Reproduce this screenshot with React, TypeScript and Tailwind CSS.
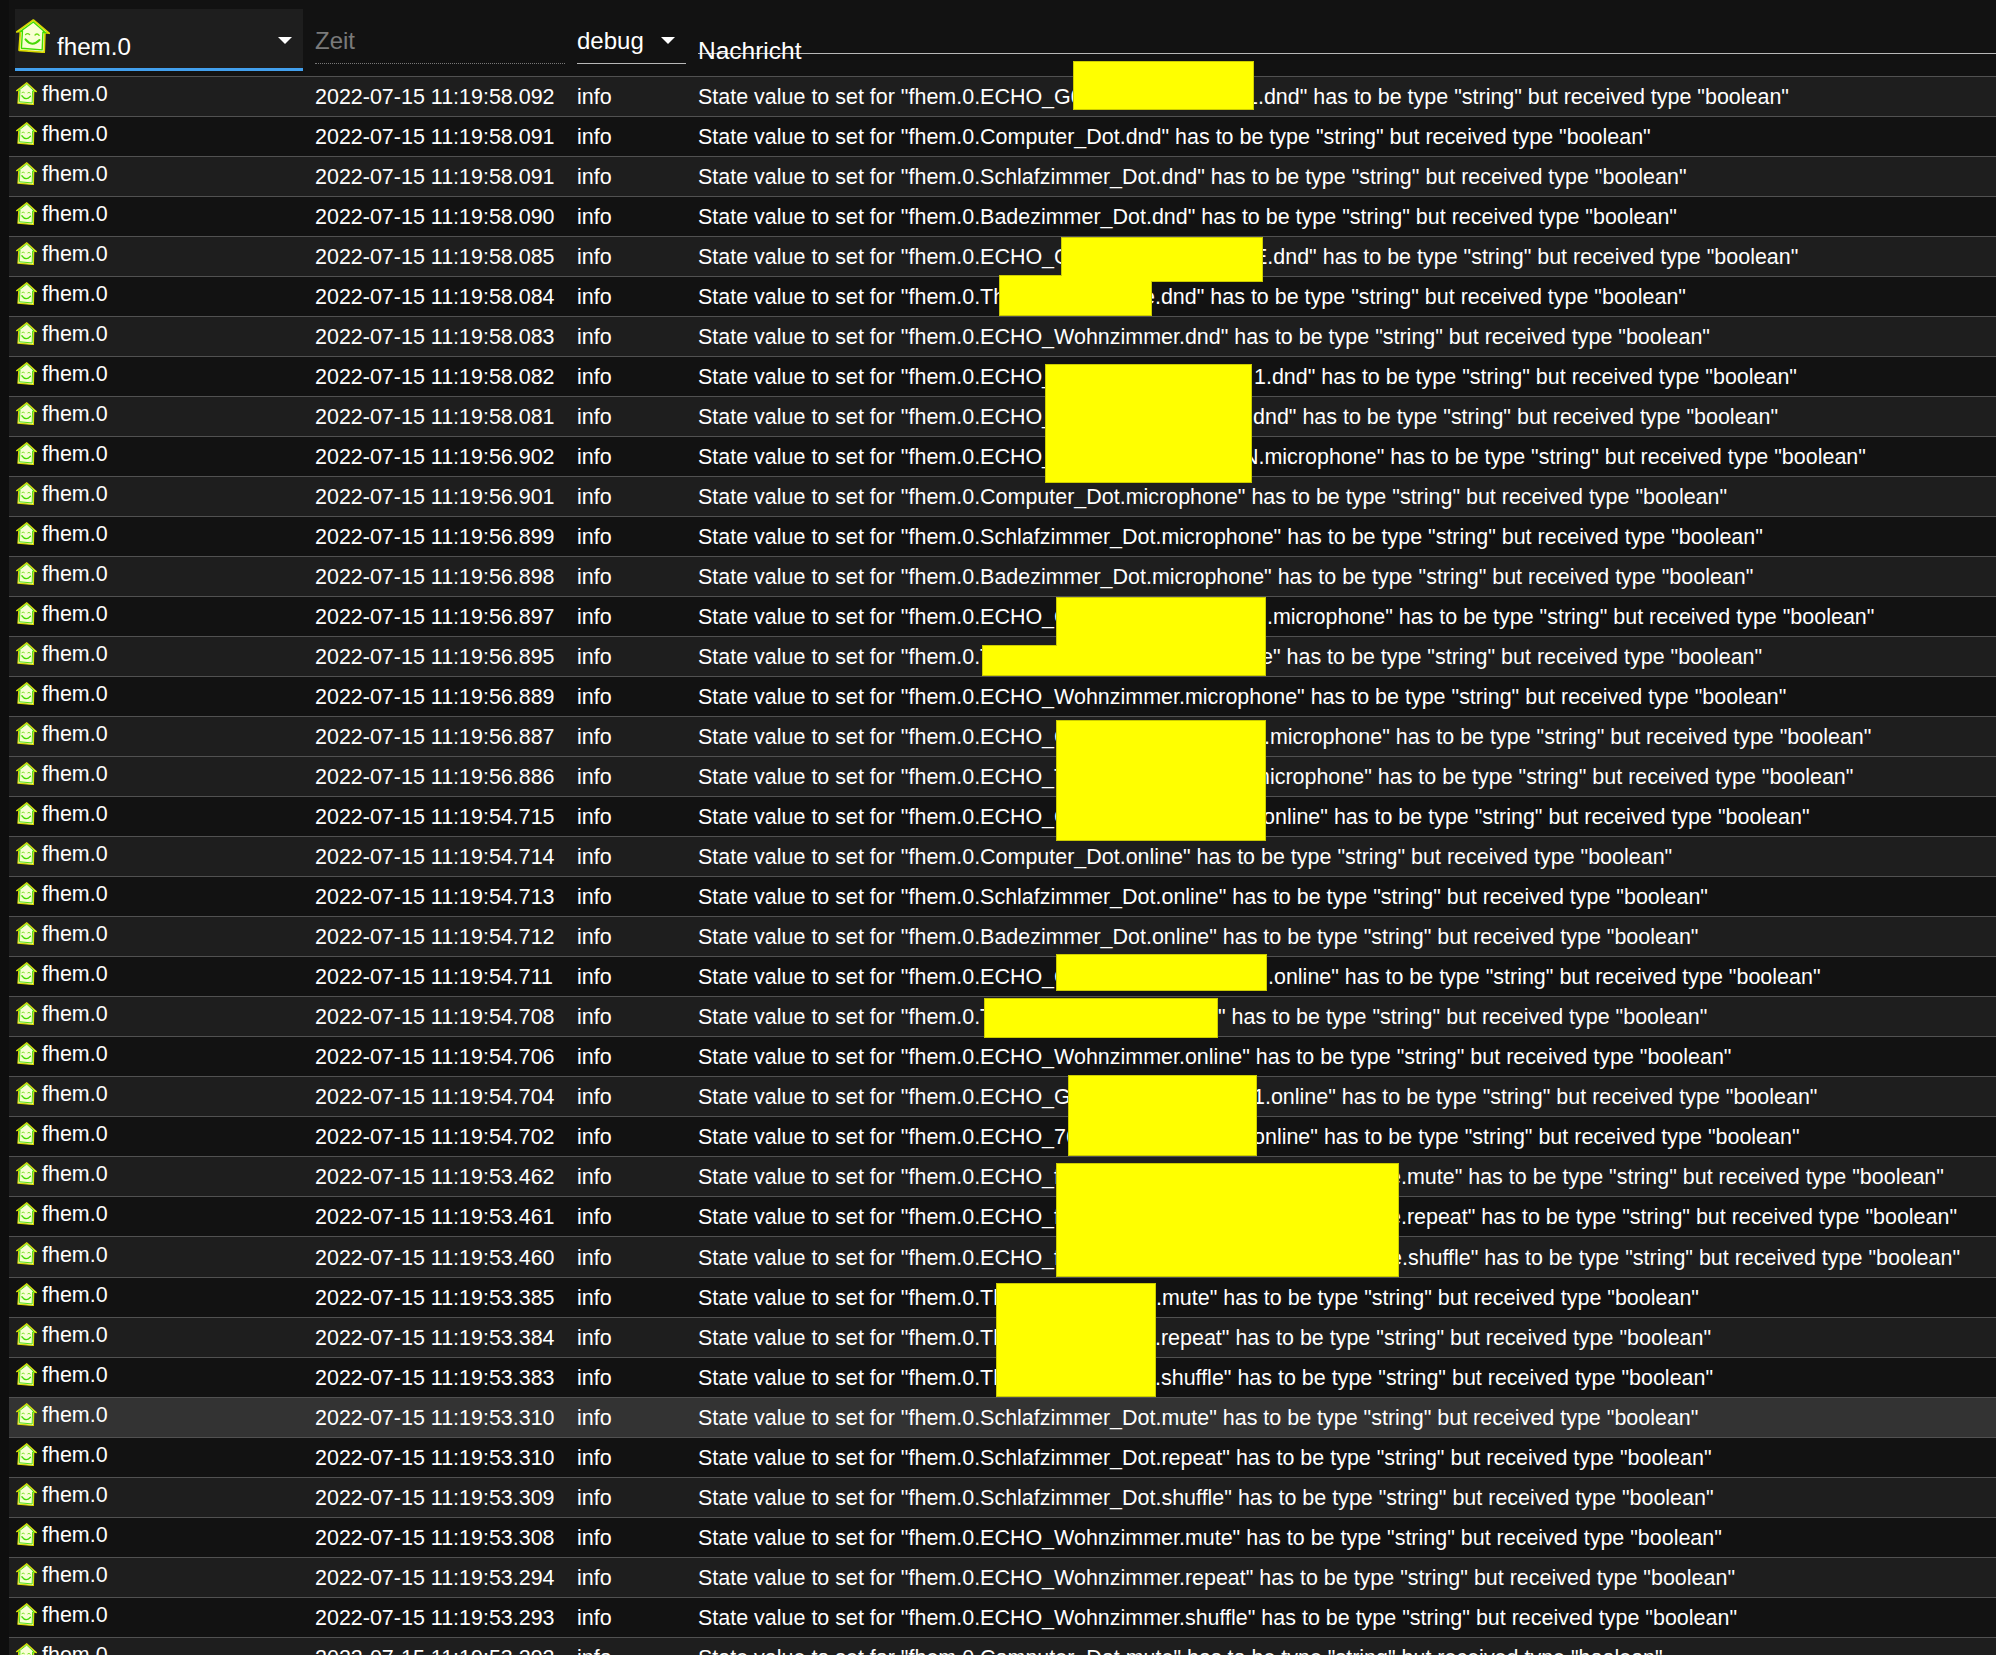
import React from 'react';

interface LogRow {
  time: string;
  pre: string;
  // width of the part up to the text after the redaction
  gap?: number;
  post?: string;
}

const TAIL = ' has to be type "string" but received type "boolean"';
const P = 'State value to set for "fhem.0.';

const rows: LogRow[] = [
  { time: '58.092', pre: 'ECHO_G0', gap: 548, post: '1.dnd"' },
  { time: '58.091', pre: 'Computer_Dot.dnd"' },
  { time: '58.091', pre: 'Schlafzimmer_Dot.dnd"' },
  { time: '58.090', pre: 'Badezimmer_Dot.dnd"' },
  { time: '58.085', pre: 'ECHO_C', gap: 555, post: 'E.dnd"' },
  { time: '58.084', pre: 'Th', gap: 445, post: 'e.dnd"' },
  { time: '58.083', pre: 'ECHO_Wohnzimmer.dnd"' },
  { time: '58.082', pre: 'ECHO_', gap: 556, post: '1.dnd"' },
  { time: '58.081', pre: 'ECHO_', gap: 555, post: 'dnd"' },
  { time: '56.902', pre: 'ECHO_', gap: 545, post: 'N.microphone"' },
  { time: '56.901', pre: 'Computer_Dot.microphone"' },
  { time: '56.899', pre: 'Schlafzimmer_Dot.microphone"' },
  { time: '56.898', pre: 'Badezimmer_Dot.microphone"' },
  { time: '56.897', pre: 'ECHO_C', gap: 569, post: '.microphone"' },
  { time: '56.895', pre: 'T', gap: 563, post: 'e"' },
  { time: '56.889', pre: 'ECHO_Wohnzimmer.microphone"' },
  { time: '56.887', pre: 'ECHO_C', gap: 566, post: '.microphone"' },
  { time: '56.886', pre: 'ECHO_T', gap: 554, post: 'microphone"' },
  { time: '54.715', pre: 'ECHO_C', gap: 565, post: 'online"' },
  { time: '54.714', pre: 'Computer_Dot.online"' },
  { time: '54.713', pre: 'Schlafzimmer_Dot.online"' },
  { time: '54.712', pre: 'Badezimmer_Dot.online"' },
  { time: '54.711', pre: 'ECHO_C', gap: 570, post: '.online"' },
  { time: '54.708', pre: 'T', gap: 520, post: '"' },
  { time: '54.706', pre: 'ECHO_Wohnzimmer.online"' },
  { time: '54.704', pre: 'ECHO_G', gap: 555, post: '1.online"' },
  { time: '54.702', pre: 'ECHO_76', gap: 555, post: 'online"' },
  { time: '53.462', pre: 'ECHO_f', gap: 691, post: 'e.mute"' },
  { time: '53.461', pre: 'ECHO_f', gap: 691, post: 'e.repeat"' },
  { time: '53.460', pre: 'ECHO_f', gap: 692, post: 'e.shuffle"' },
  { time: '53.385', pre: 'Th', gap: 458, post: '.mute"' },
  { time: '53.384', pre: 'Th', gap: 457, post: '.repeat"' },
  { time: '53.383', pre: 'Th', gap: 457, post: '.shuffle"' },
  { time: '53.310', pre: 'Schlafzimmer_Dot.mute"' },
  { time: '53.310', pre: 'Schlafzimmer_Dot.repeat"' },
  { time: '53.309', pre: 'Schlafzimmer_Dot.shuffle"' },
  { time: '53.308', pre: 'ECHO_Wohnzimmer.mute"' },
  { time: '53.294', pre: 'ECHO_Wohnzimmer.repeat"' },
  { time: '53.293', pre: 'ECHO_Wohnzimmer.shuffle"' },
  { time: '53.292', pre: 'Computer_Dot.mute"' },
];

// yellow boxes painted over the log: left, top, width, height
const redactions = [
  'left-[1073px] top-[61px] w-[181px] h-[49px]',
  'left-[1061px] top-[237px] w-[202px] h-[45px]',
  'left-[999px] top-[275px] w-[153px] h-[41px]',
  'left-[1045px] top-[364px] w-[207px] h-[119px]',
  'left-[1056px] top-[597px] w-[210px] h-[79px]',
  'left-[982px] top-[645px] w-[284px] h-[31px]',
  'left-[1056px] top-[720px] w-[210px] h-[121px]',
  'left-[1056px] top-[954px] w-[211px] h-[37px]',
  'left-[984px] top-[998px] w-[234px] h-[40px]',
  'left-[1068px] top-[1075px] w-[189px] h-[81px]',
  'left-[1056px] top-[1163px] w-[343px] h-[114px]',
  'left-[996px] top-[1283px] w-[160px] h-[114px]',
];

const rowBg = (i: number) => {
  if (i === 33) return 'bg-[#333333]';
  const light = i <= 16 ? i % 2 === 0 : i % 2 === 1;
  return light ? 'bg-[#1e1e1e]' : 'bg-[#121212]';
};

const HouseIcon: React.FC<{ className: string }> = ({ className }) => (
  <svg viewBox="0 0 100 100" preserveAspectRatio="none" className={className}>
    <path d="M2 38 L51 3 L98 42 L85 40 L83 98 L9 92 L13 36 Z" fill="#f6ffc8" stroke="#d9d900" strokeWidth="5" strokeLinejoin="round" />
    <path d="M12 37 L51 9 L88 41 L79 39 L77 91 L16 86 L19 35 Z" fill="#f8ffd4" stroke="#3fdc00" strokeWidth="4" strokeLinejoin="round" />
    <path d="M28 46 Q34 40 40 46 M56 47 Q62 41 68 48" fill="none" stroke="#6cdc14" strokeWidth="4" strokeLinecap="round" />
    <path d="M28 60 Q47 84 69 62" fill="none" stroke="#48d808" strokeWidth="6" strokeLinecap="round" />
  </svg>
);

const Arrow: React.FC = () => (
  <div className="w-0 h-0 border-x-[7px] border-x-transparent border-t-[7px] border-t-white" />
);

const App: React.FC = () => {
  return (
    <div className="relative h-[1655px] overflow-hidden bg-[#0e0e0e] pl-[9px] text-white font-['Liberation_Sans',Arial,sans-serif]">
      <div className="bg-[#121212] min-h-full">
        <div className="flex h-[77px] border-b border-[#515151] text-[24px]">
          <div className="ml-[6px] mt-[9px] w-[288px] h-[62px] flex bg-[#1e1e1e] border-b-[3px] border-[#42a0ee]">
            <HouseIcon className="w-[34px] h-[34px] mt-[10px] ml-[1px] shrink-0" />
            <span className="ml-[7px] mt-[24px] leading-7 text-[24.2px]">fhem.0</span>
            <div className="ml-auto mr-[11px] mt-[28px]">
              <Arrow />
            </div>
          </div>
          <div className="ml-[12px] mt-[9px] w-[250px] h-[55px] border-b border-dotted border-[#777777] pt-[18px] leading-7 text-[#7a7a7a]">
            Zeit
          </div>
          <div className="ml-[12px] mt-[9px] w-[109px] h-[55px] border-b border-[#b8b8b8] pt-[18px] leading-7 flex">
            <span>debug</span>
            <div className="ml-auto mr-[11px] mt-[10px]">
              <Arrow />
            </div>
          </div>
          <div className="ml-[12px] flex-1 h-[54px] border-b border-[#b8b8b8] pt-[37px] leading-7 text-[24.5px]">
            Nachricht
          </div>
        </div>

        {rows.map((row, i) => (
          <div
            key={i}
            className={`flex items-center border-b border-[#515151] pt-[2px] text-[21.48px] whitespace-nowrap ${i === 29 ? 'h-[41px]' : 'h-10'} ${rowBg(i)}`}
          >
            <div className="w-[306px] flex items-center pl-[7px] -mt-[6px]">
              <HouseIcon className="w-[21px] h-[23px] shrink-0 mt-[-3px]" />
              <span className="ml-[5px]">fhem.0</span>
            </div>
            <div className="w-[262px]">2022-07-15 11:19:{row.time}</div>
            <div className="w-[121px]">info</div>
            <div>
              {row.gap ? (
                <>
                  <span className="inline-block align-bottom" style={{ width: row.gap }}>
                    {P}
                    {row.pre}
                  </span>
                  {row.post}
                  {TAIL}
                </>
              ) : (
                <>
                  {P}
                  {row.pre}
                  {TAIL}
                </>
              )}
            </div>
          </div>
        ))}
      </div>

      {/* edge colour first, fill on top, so that joined boxes show no inner line */}
      {redactions.map((r, i) => (
        <div key={i} className={`absolute bg-[#cccc00] ${r}`} />
      ))}
      {redactions.map((r, i) => (
        <div key={`fill-${i}`} className={`absolute bg-[#ffff00] border border-transparent bg-clip-padding ${r}`} />
      ))}
    </div>
  );
};

export default App;
